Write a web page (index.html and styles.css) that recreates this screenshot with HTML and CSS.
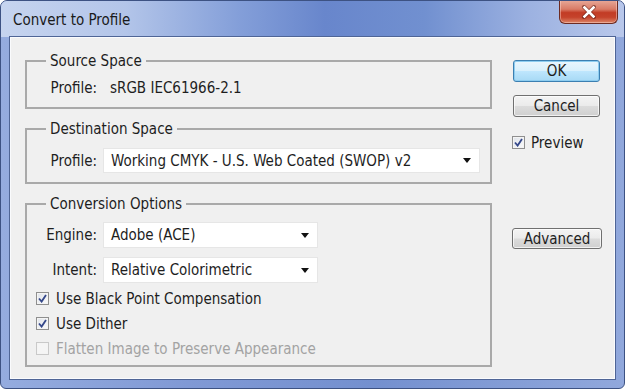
FILE: index.html
```html
<!DOCTYPE html>
<html lang="en">
<head>
    <meta charset="UTF-8">
    <title>Convert to Profile</title>
    <link rel="stylesheet" href="styles.css">
</head>
<body>
    <div class="window">
        <div class="titlebar">
            <span class="title">Convert to Profile</span>
            <button type="button" class="close-btn" aria-label="Close">
                <svg width="16" height="14" viewBox="0 0 16 14">
                    <path d="M3 2 L13 12 M13 2 L3 12" stroke="#5a1a12" stroke-width="4" stroke-linecap="round" fill="none" opacity="0.6"/>
                    <path d="M3.5 2.5 L12.5 11.5 M12.5 2.5 L3.5 11.5" stroke="#fff" stroke-width="2.6" stroke-linecap="square" fill="none"/>
                </svg>
            </button>
        </div>

        <div class="client">
            <div class="groups">
                <fieldset class="group source">
                    <legend>Source Space</legend>
                    <div class="row">
                        <span class="label">Profile:</span>
                        <span class="value">sRGB IEC61966-2.1</span>
                    </div>
                </fieldset>

                <fieldset class="group destination">
                    <legend>Destination Space</legend>
                    <div class="row">
                        <span class="label">Profile:</span>
                        <div class="dropdown wide">
                            <span>Working CMYK - U.S. Web Coated (SWOP) v2</span>
                            <span class="arrow"></span>
                        </div>
                    </div>
                </fieldset>

                <fieldset class="group options">
                    <legend>Conversion Options</legend>
                    <div class="row">
                        <span class="label">Engine:</span>
                        <div class="dropdown">
                            <span>Adobe (ACE)</span>
                            <span class="arrow"></span>
                        </div>
                    </div>
                    <div class="row intent">
                        <span class="label">Intent:</span>
                        <div class="dropdown">
                            <span>Relative Colorimetric</span>
                            <span class="arrow"></span>
                        </div>
                    </div>
                    <div class="checks">
                        <label class="check">
                            <span class="box"><svg width="9" height="9" viewBox="0 0 9 9"><path d="M1 4.5 L3.6 7.6 L8 1" stroke="#35488a" stroke-width="1.8" fill="none"/></svg></span>
                            Use Black Point Compensation
                        </label>
                        <label class="check">
                            <span class="box"><svg width="9" height="9" viewBox="0 0 9 9"><path d="M1 4.5 L3.6 7.6 L8 1" stroke="#35488a" stroke-width="1.8" fill="none"/></svg></span>
                            Use Dither
                        </label>
                        <label class="check disabled">
                            <span class="box"></span>
                            Flatten Image to Preserve Appearance
                        </label>
                    </div>
                </fieldset>
            </div>

            <div class="actions">
                <button type="button" class="btn default">OK</button>
                <button type="button" class="btn">Cancel</button>
                <label class="check preview">
                    <span class="box"><svg width="9" height="9" viewBox="0 0 9 9"><path d="M1 4.5 L3.6 7.6 L8 1" stroke="#35488a" stroke-width="1.8" fill="none"/></svg></span>
                    Preview
                </label>
                <button type="button" class="btn advanced">Advanced</button>
            </div>
        </div>
    </div>
</body>
</html>
```

FILE: styles.css
```css
body {
    margin: 0;
    padding: 0;
    background: #ffffff;
    font-family: "DejaVu Sans Condensed", "DejaVu Sans", sans-serif;
    font-stretch: condensed;
    font-size: 15px;
    color: #1e1e1e;
}

.window {
    width: 623px;
    height: 387px;
    border: 1px solid #3d5283;
    border-radius: 7px 7px 6px 6px;
    background: linear-gradient(to right, #95acdf 0%, #8099d5 30%, #7490cf 60%, #91a8dc 100%);
    display: flex;
    flex-direction: column;
    overflow: hidden;
}

.titlebar {
    height: 36px;
    display: flex;
    justify-content: space-between;
    align-items: flex-start;
    background: linear-gradient(to right, #c6d4ef 0%, #b3c5e9 20%, #849fd9 38%, #6886cc 52%, #7190d0 68%, #9db2e1 85%, #b9c8eb 100%);
}

.title {
    margin: 10px 0 0 12px;
    font-size: 15px;
    color: #1a1a1a;
}

.close-btn {
    width: 59px;
    height: 24px;
    margin: -1px 6px 0 0;
    padding: 0;
    border: 1px solid #6d2b22;
    border-top: none;
    border-radius: 0 0 6px 6px;
    background: linear-gradient(to bottom, #e8aa9a 0%, #d97b66 40%, #c23c25 55%, #c5432b 75%, #dc8568 100%);
    box-shadow: inset 0 0 0 1px rgba(255, 220, 210, 0.45);
    display: flex;
    align-items: center;
    justify-content: center;
}

.client {
    flex: 1;
    margin: 0 9px 9px 9px;
    border: 1px solid #fafbfd;
    box-shadow: 0 0 0 1px #4f6596;
    background: #f0f0f0;
    display: flex;
    gap: 20px;
    padding: 15px 0 0 14px;
}

.groups {
    width: 467px;
    display: flex;
    flex-direction: column;
    gap: 12px;
}

.group {
    margin: 0;
    padding: 0;
    border: 2px solid #a9a9a9;
    min-width: 0;
}

.group legend {
    margin-left: 19px;
    padding: 0 4px;
    line-height: 16px;
}

.row {
    display: flex;
    align-items: center;
    gap: 6px;
}

.label {
    width: 70px;
    text-align: right;
}

.source .row {
    height: 24px;
    margin: 7px 0 7px 0;
}

.source .value {
    padding-left: 7px;
}

.destination .row {
    margin: 11px 0 9px 0;
}

.options .row {
    margin-top: 10px;
}

.options .row.intent {
    margin-top: 9px;
}

.dropdown {
    width: 215px;
    height: 26px;
    box-sizing: border-box;
    background: #ffffff;
    border: 1px solid #e6e6e6;
    padding: 0 8px 0 7px;
    display: flex;
    align-items: center;
    justify-content: space-between;
}

.dropdown.wide {
    width: 377px;
    height: 25px;
}

.arrow {
    width: 0;
    height: 0;
    border-left: 4.5px solid transparent;
    border-right: 4.5px solid transparent;
    border-top: 5px solid #111;
}

.checks {
    display: flex;
    flex-direction: column;
    margin: 3px 0 4px 9px;
}

.check {
    height: 25px;
    display: flex;
    align-items: center;
    gap: 7px;
}

.box {
    width: 13px;
    height: 13px;
    box-sizing: border-box;
    border: 1px solid #8f8f8f;
    background: linear-gradient(135deg, #dfe3ea 0%, #fbfbfb 100%);
    box-shadow: inset 0 0 0 1px #f4f4f4;
    display: flex;
    align-items: center;
    justify-content: center;
}

.check.disabled {
    color: #a3a3a3;
}

.check.disabled .box {
    border-color: #c9c9c9;
    background: #f5f5f5;
}

.actions {
    display: flex;
    flex-direction: column;
    align-items: flex-start;
    padding-top: 7px;
}

.btn {
    width: 87px;
    height: 22px;
    margin-left: 1px;
    padding: 0;
    font: inherit;
    color: #1e1e1e;
    border: 1px solid #707070;
    border-radius: 3px;
    background: linear-gradient(to bottom, #f4f4f4 0%, #ebebeb 48%, #dcdcdc 52%, #cfcfcf 100%);
    box-shadow: inset 0 0 0 1px rgba(255, 255, 255, 0.7);
    cursor: pointer;
}

.btn.default {
    border-color: #3c7fb1;
    background: linear-gradient(to bottom, #eaf6fd 0%, #d9f0fc 48%, #bee6fd 52%, #a7d9f5 100%);
    box-shadow: inset 0 0 0 1px #8ecdf0;
}

.btn + .btn {
    margin-top: 13px;
}

.preview {
    margin-top: 13px;
    gap: 6px;
    height: 25px;
}

.btn.advanced {
    width: 90px;
    height: 21px;
    margin: 73px 0 0 0;
}
```
